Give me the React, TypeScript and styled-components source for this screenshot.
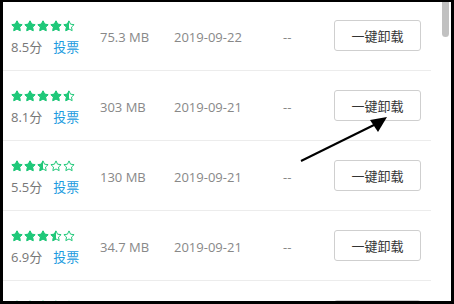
import React from "react";
import styled, { createGlobalStyle } from "styled-components";

const GlobalStyle = createGlobalStyle`
  html, body {
    margin: 0;
    padding: 0;
    background: #000;
  }
  body {
    font-family: "Open Sans", "Noto Sans CJK SC", sans-serif;
  }
`;

const Frame = styled.div`
  position: relative;
  width: 454px;
  height: 304px;
  box-sizing: border-box;
  border-style: solid;
  border-color: #000;
  border-width: 2px 3px 3px 3px;
  background: #fff;
  overflow: hidden;
`;

const List = styled.div`
  display: flex;
  flex-direction: column;
  width: 428px;
  margin-top: -1px;
`;

const Row = styled.div`
  display: grid;
  grid-template-columns: 89px 74px 109px 51px 87px;
  align-items: center;
  height: 69px;
  padding-left: 8px;
  border-bottom: 1px solid #ececec;
  font-size: 13px;
  color: #888;
`;

const Rating = styled.div`
  display: flex;
  flex-direction: column;
  gap: 8px;
  margin-top: 4px;
`;

const Stars = styled.div`
  display: flex;
  gap: 1px;
  height: 12px;
`;

const ScoreLine = styled.div`
  display: flex;
  gap: 11px;
  line-height: 15px;
`;

const Score = styled.span`
  color: #777;
`;

const Vote = styled.a`
  color: #1a9be0;
  text-decoration: none;
  cursor: pointer;
`;

const Cell = styled.span`
  color: #888;
  margin-top: 3px;
  white-space: nowrap;
`;

const UninstallButton = styled.button`
  width: 87px;
  height: 31px;
  box-sizing: border-box;
  border: 1px solid #cfcfcf;
  border-radius: 3px;
  background: #fff;
  color: #333;
  font-family: "Noto Sans CJK SC", sans-serif;
  font-size: 13px;
  padding: 0;
  cursor: pointer;
`;

const Thumb = styled.div`
  position: absolute;
  top: 0;
  right: 2px;
  width: 7px;
  height: 35px;
  background: #c1c1c1;
  border-radius: 0 0 4px 4px;
`;

const Overlay = styled.svg`
  position: absolute;
  left: -3px;
  top: -2px;
  pointer-events: none;
`;

const STAR =
  "M12 1.8l3.1 6.6 7.1.9-5.2 4.9 1.3 7.1L12 17.9l-6.3 3.4 1.3-7.1L1.8 9.3l7.1-.9z";

const GREEN = "#1fc879";

function Star({ fill, id }: { fill: number; id: string }) {
  return (
    <svg width="12" height="12" viewBox="0 0 24 24">
      <defs>
        <clipPath id={id}>
          <rect x="0" y="0" width={24 * fill} height="24" />
        </clipPath>
      </defs>
      <path d={STAR} fill="none" stroke={GREEN} strokeWidth="2" strokeLinejoin="round" />
      {fill > 0 && (
        <path
          d={STAR}
          fill={GREEN}
          stroke={GREEN}
          strokeWidth="2"
          strokeLinejoin="round"
          clipPath={`url(#${id})`}
        />
      )}
    </svg>
  );
}

const apps = [
  { stars: 4.5, score: "8.5分", size: "75.3 MB", date: "2019-09-22" },
  { stars: 4.5, score: "8.1分", size: "303 MB", date: "2019-09-21" },
  { stars: 2.5, score: "5.5分", size: "130 MB", date: "2019-09-21" },
  { stars: 3.5, score: "6.9分", size: "34.7 MB", date: "2019-09-21" },
  { stars: 3.5, score: "7.0分", size: "12.4 MB", date: "2019-09-20" },
];

export default function App() {
  return (
    <>
      <GlobalStyle />
      <Frame>
        <List>
          {apps.map((app, i) => (
            <Row key={i}>
              <Rating>
                <Stars>
                  {[0, 1, 2, 3, 4].map((s) => (
                    <Star
                      key={s}
                      id={`star-${i}-${s}`}
                      fill={Math.max(0, Math.min(1, app.stars - s))}
                    />
                  ))}
                </Stars>
                <ScoreLine>
                  <Score>{app.score}</Score>
                  <Vote>投票</Vote>
                </ScoreLine>
              </Rating>
              <Cell>{app.size}</Cell>
              <Cell>{app.date}</Cell>
              <Cell>--</Cell>
              <UninstallButton>一键卸载</UninstallButton>
            </Row>
          ))}
        </List>
        <Thumb />
        <Overlay width="454" height="304" viewBox="0 0 454 304">
          <line x1="301" y1="161" x2="378" y2="123" stroke="#000" strokeWidth="2" />
          <polygon points="370,120 387,117 378,132" fill="#000" />
        </Overlay>
      </Frame>
    </>
  );
}
